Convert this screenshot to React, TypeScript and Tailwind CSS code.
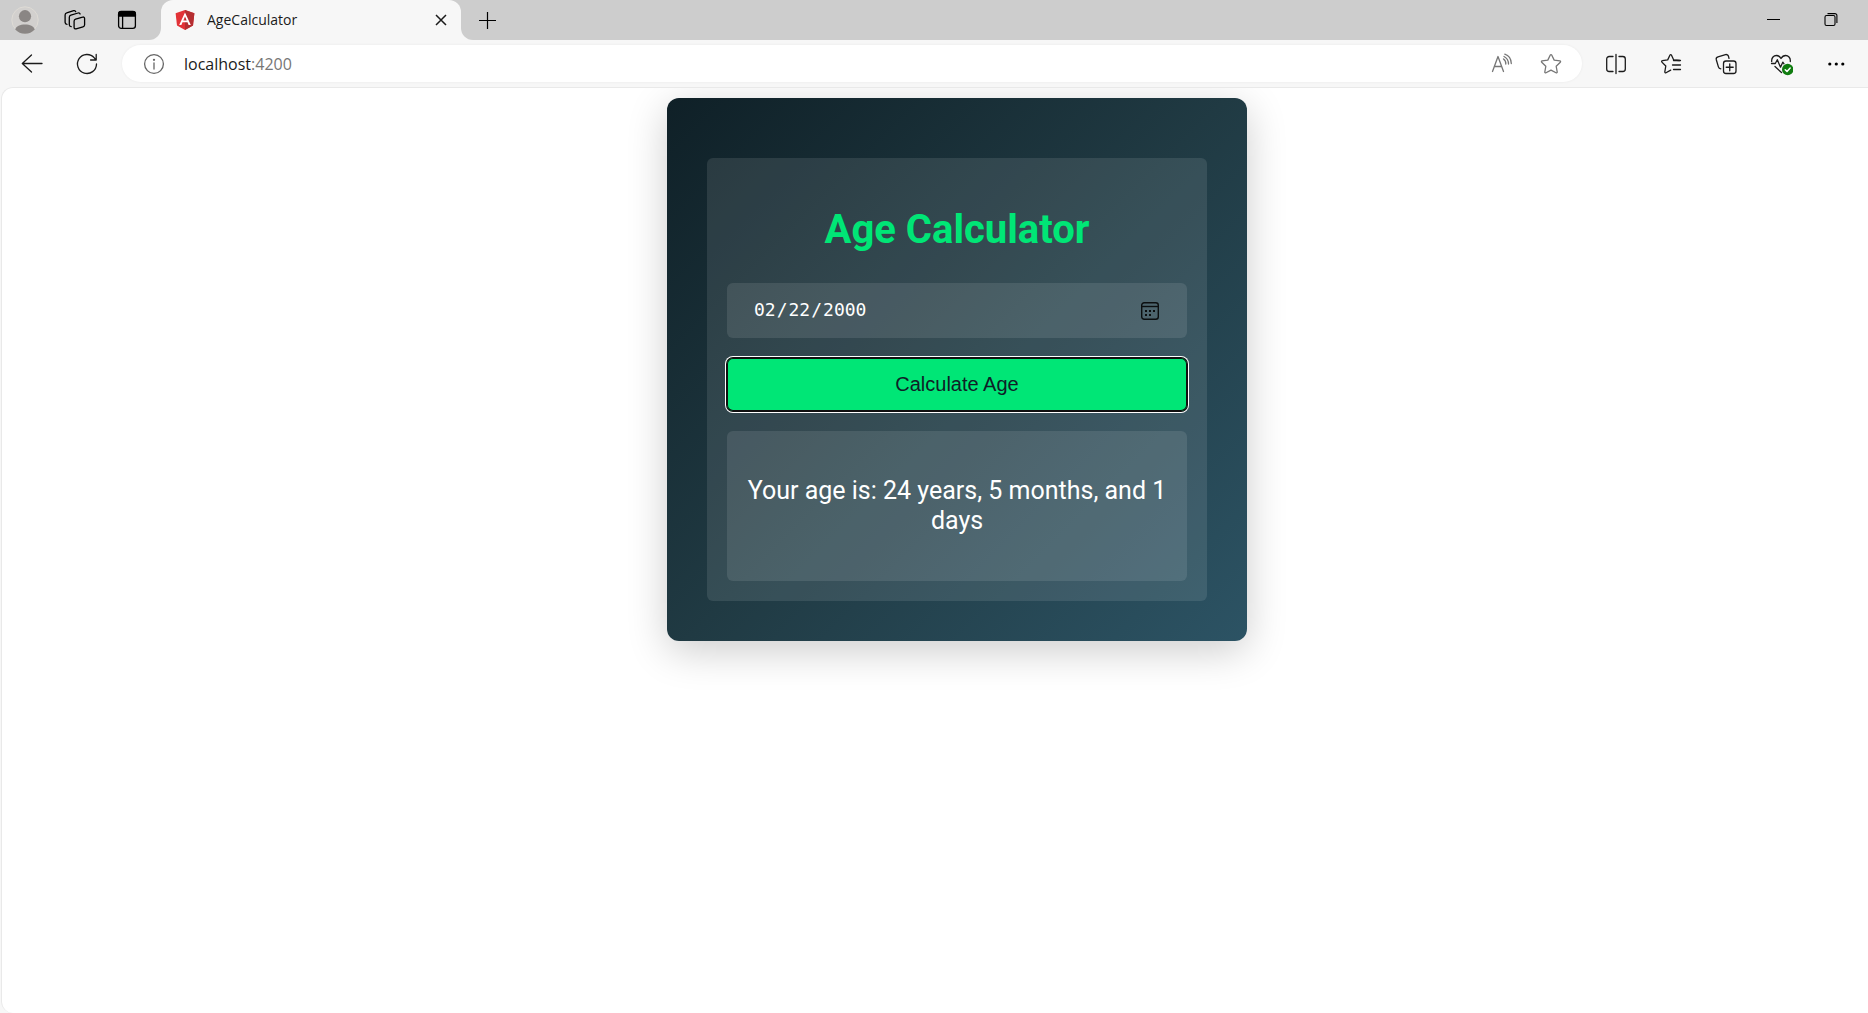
import { useState } from "react";
import type { ReactNode } from "react";

function Glyph({ children }: { children: ReactNode }) {
  return (
    <svg
      width="24"
      height="24"
      viewBox="0 0 24 24"
      fill="none"
      stroke="currentColor"
      strokeWidth="1.3"
      strokeLinecap="round"
      strokeLinejoin="round"
      className="shrink-0"
      aria-hidden="true"
    >
      {children}
    </svg>
  );
}

function IconButton({ label, className, children }: { label: string; className: string; children: ReactNode }) {
  return (
    <button type="button" aria-label={label} className={`flex shrink-0 items-center justify-center ${className}`}>
      {children}
    </button>
  );
}

function Avatar() {
  return (
    <svg width="28" height="28" viewBox="0 0 28 28" aria-hidden="true">
      <circle cx="14" cy="14" r="13.2" fill="#d2d0ce" stroke="#dedbd5" strokeWidth="1" />
      <circle cx="14" cy="10.2" r="6.1" fill="#8a8684" />
      <path d="M4.2 23.6C5.2 20 9 18.4 14 18.4s8.8 1.6 9.8 5.200A13.4 13.4 0 0 1 14 27.8a13.4 13.4 0 0 1-9.8-4.2Z" fill="#8a8684" />
    </svg>
  );
}

function TabStrip() {
  return (
    <div className="flex h-10 bg-[#f7f7f7]">
      <div className="flex w-[161px] shrink-0 items-center rounded-br-xl bg-[#cdcdcd]">
        <IconButton label="Profile" className="h-10 w-[50px]">
          <Avatar />
        </IconButton>
        <IconButton label="Workspaces" className="h-10 w-[50px]">
          <Glyph>
            <path d="M12.6 11.1 19.6 9.1a1.5 1.5 0 0 1 2 1.4v6.2a2.2 2.2 0 0 1-1.600 2.100l-6.900 2a1.500 1.500 0 0 1-2-1.400v-6.200a2.200 2.200 0 0 1 1.500-2.100Z" />
            <path d="M8.200 18.700a2 2 0 0 1-1.900-1.900V9.300a2.200 2.200 0 0 1 1.600-2.100l7.200-2.200a1.600 1.600 0 0 1 2 1" />
            <path d="M4 16.300a2 2 0 0 1-1.900-1.900V7a2.200 2.200 0 0 1 1.600-2.100l7-2.200a1.600 1.600 0 0 1 2 1" />
          </Glyph>
        </IconButton>
        <IconButton label="Tab actions" className="h-10 w-[54px]">
          <Glyph>
            <rect x="3.6" y="3.6" width="16.8" height="16.8" rx="2.6" />
            <path d="M3.6 8V6a2.5 2.5 0 0 1 2.5-2.5h11.8A2.5 2.5 0 0 1 20.4 6v2Z" fill="currentColor" />
            <path d="M7.6 8v12" />
          </Glyph>
        </IconButton>
      </div>

      <div className="w-[300px] shrink-0 bg-[#cdcdcd]">
        <div className="flex h-10 items-center rounded-t-xl bg-[#f7f7f7] pr-1 pl-3.5">
          <svg width="20" height="20" viewBox="0 0 20 20" className="shrink-0" aria-hidden="true">
            <path d="M10 0 19.4 3.3 18 15.6 10 20 2 15.6.6 3.3Z" fill="#e23237" />
            <path d="M10 0 19.4 3.3 18 15.6 10 20Z" fill="#b52e31" />
            <path d="M10 2.400 4.2 15h2.200l1.100-2.800h5L13.600 15h2.200ZM10 6.600l1.700 3.900H8.300Z" fill="#fff" fillRule="evenodd" />
          </svg>
          <span className="ml-3 flex-1 truncate text-sm text-[#1b1b1b]">AgeCalculator</span>
          <IconButton label="Close tab" className="size-8">
            <svg width="12" height="12" viewBox="0 0 12 12" stroke="#1b1b1b" strokeWidth="1.5" aria-hidden="true">
              <path d="m1 1 10 10M11 1 1 11" />
            </svg>
          </IconButton>
        </div>
      </div>

      <div className="flex flex-1 items-center rounded-bl-xl bg-[#cdcdcd] pr-[9px]">
        <IconButton label="New tab" className="h-10 w-[53px]">
          <svg width="19" height="19" viewBox="0 0 19 19" stroke="#000" strokeWidth="1.2" aria-hidden="true">
            <path d="M9.5 1v17M1 9.5h17" />
          </svg>
        </IconButton>
        <div className="flex-1" />
        <IconButton label="Minimize" className="h-10 w-[57px]">
          <svg width="13" height="13" viewBox="0 0 13 13" stroke="#000" strokeWidth="1" aria-hidden="true">
            <path d="M0 5.5h13" />
          </svg>
        </IconButton>
        <IconButton label="Restore" className="h-10 w-[57px]">
          <svg width="14" height="14" viewBox="0 0 14 14" fill="none" stroke="#000" strokeWidth="1.1" aria-hidden="true">
            <rect x="1" y="2.5" width="10" height="10" rx="1.5" />
            <path d="M3.5.6h7.400a2 2 0 0 1 2 2V10" />
          </svg>
        </IconButton>
      </div>
    </div>
  );
}

function Toolbar() {
  const [path, setPath] = useState(":4200");
  return (
    <div className="flex h-[47px] items-center bg-[#f7f7f7] pr-1 text-[#1b1b1b]">
      <IconButton label="Back" className="h-10 w-16">
        <Glyph>
          <path d="M2.3 11.5H22M11.5 3 2.3 11.5l9.200 8.500" />
        </Glyph>
      </IconButton>
      <IconButton label="Refresh" className="mr-[13px] h-10 w-[45px]">
        <Glyph>
          <path d="M21.500 12a9.500 9.500 0 1 1-2.200-6.100L21 8M21.200 2.500V8h-5.600" />
        </Glyph>
      </IconButton>

      <div className="flex h-[37px] flex-1 items-center rounded-full bg-white pr-[19px] pl-5 shadow-[0_0_3px_rgba(0,0,0,0.06)]">
        <IconButton label="View site information" className="size-6 text-[#666]">
          <Glyph>
            <circle cx="12" cy="12" r="9.4" />
            <path d="M12 11v6" />
            <circle cx="12" cy="7.8" r=".5" fill="currentColor" />
          </Glyph>
        </IconButton>
        <label className="ml-[18px] flex flex-1 items-center text-base">
          <span>localhost</span>
          <input
            aria-label="Address"
            value={path}
            onChange={(e) => setPath(e.target.value)}
            className="min-w-0 flex-1 bg-transparent text-[#767676] outline-none"
          />
        </label>
        <IconButton label="Read aloud" className="w-[50px] text-[#767676]">
          <Glyph>
            <path d="m3.500 19.500 5.500-15L14.500 19.500M5.300 14.500h7.400" />
            <path d="M14.500 7a5.500 5.500 0 0 1 2.300 5M15 4.500a8.500 8.500 0 0 1 4.500 7.500M15.800 2.200c4 1.300 6.300 5 6.500 9.300" />
          </Glyph>
        </IconButton>
        <IconButton label="Add to favorites" className="ml-[13px] w-6 text-[#767676]">
          <Glyph>
            <path d="M11.300 3a.8.8 0 0 1 1.400 0l2.500 5.100 5.700.8a.8.8 0 0 1 .4 1.400l-4.100 4 1 5.700a.8.8 0 0 1-1.200.8L12 18.100l-5 2.700a.8.8 0 0 1-1.200-.8l1-5.700-4.100-4a.8.8 0 0 1 .4-1.400l5.700-.8Z" />
          </Glyph>
        </IconButton>
      </div>

      <div className="ml-1.5 flex items-center pr-px">
        <IconButton label="Split screen" className="h-10 w-[55px]">
          <Glyph>
            <path d="M9 4.500H5.200a2.500 2.500 0 0 0-2.500 2.500v10a2.500 2.500 0 0 0 2.500 2.500H9M15 4.500h3.800A2.500 2.500 0 0 1 21.300 7v10a2.500 2.500 0 0 1-2.500 2.500H15M12 2.500v19" />
          </Glyph>
        </IconButton>
        <IconButton label="Favorites" className="h-10 w-[55px]">
          <Glyph>
            <path d="M20.500 8.500 14.700 8 12.400 3a.8.8 0 0 0-1.400 0L8.700 7.900l-5.300.8a.8.8 0 0 0-.5 1.400L6.800 14l-1 5.900a.8.8 0 0 0 1.200.8l4.700-2.600" />
            <path d="M14.500 8.500h7M13.500 13h8M14.500 17.500h7" />
          </Glyph>
        </IconButton>
        <IconButton label="Collections" className="h-10 w-[55px]">
          <Glyph>
            <rect x="9.500" y="9" width="12.500" height="12.500" rx="2.500" />
            <path d="M15.750 11.800v7M12.200 15.250h7" />
            <path d="M6.800 16.800a2.500 2.500 0 0 1-2.400-1.900L2.300 7.700a2.400 2.400 0 0 1 1.700-2.900l7.500-2.200a2.400 2.400 0 0 1 3 1.700l.5 2" />
          </Glyph>
        </IconButton>
        <IconButton label="Browser essentials" className="h-10 w-[55px]">
          <Glyph>
            <path d="M2.700 9.500C2.300 5.500 5 3.500 7.300 3.500c2.200 0 3.700 1.200 4.700 3 1-1.800 2.500-3 4.700-3 2.300 0 5 2 4.600 6" />
            <path d="M2.500 11.500h3.800l2-3.800 3.200 7.500 2.300-5 1.200 1.600M6 14.500l6.500 6" />
            <circle cx="18.700" cy="17.500" r="5.700" fill="#107c10" stroke="none" />
            <path d="m16.200 17.700 1.800 1.700 3.200-3.400" stroke="#fff" strokeWidth="1.5" />
          </Glyph>
        </IconButton>
        <IconButton label="Settings and more" className="h-10 w-[55px]">
          <Glyph>
            <g fill="#000" stroke="none">
              <circle cx="5.800" cy="12" r="1.600" />
              <circle cx="12.300" cy="12" r="1.600" />
              <circle cx="18.800" cy="12" r="1.600" />
            </g>
          </Glyph>
        </IconButton>
      </div>
    </div>
  );
}

function AgeCalculator() {
  const [birthDate, setBirthDate] = useState("2000-02-22");
  return (
    <section className="w-[580px] rounded-xl bg-[linear-gradient(135deg,#0f2027,#203a43,#2c5364)] px-10 pt-[60px] pb-10 font-['Roboto',sans-serif] shadow-[0_10px_40px_rgba(0,0,0,0.2)]">
      <div className="flex flex-col gap-5 rounded-md bg-white/10 p-5">
        <h1 className="mt-7 mb-2.5 text-center text-[40px] leading-[47px] font-bold text-[#00e676]">Age Calculator</h1>
        <div className="relative flex">
          <input
            type="date"
            aria-label="Date of birth"
            value={birthDate}
            onChange={(e) => setBirthDate(e.target.value)}
            className="h-[55px] w-full rounded-md bg-white/10 px-[26px] pb-0.5 font-['DejaVu_Sans_Mono',monospace] text-lg text-white outline-none [&::-webkit-calendar-picker-indicator]:opacity-0"
          />
          <svg
            width="20"
            height="20"
            viewBox="0 0 20 20"
            fill="none"
            stroke="#0c0f10"
            strokeWidth="1.4"
            className="pointer-events-none absolute top-[18px] right-[27px]"
            aria-hidden="true"
          >
            <rect x="1.700" y="1.700" width="16.600" height="16.600" rx="2.500" />
            <path d="M1.700 5.500h16.600" />
            <path d="M5 10h2M9 10h2M13 10h2M5 14h2M9 14h2" strokeWidth="2" />
          </svg>
        </div>
        <button
          type="button"
          className="h-[53px] rounded-md bg-[#00e676] pb-0.5 font-['Liberation_Sans',Arial,sans-serif] text-xl text-[#0f2027] shadow-[inset_0_0_0_1px_#101010,0_0_0_1px_#101010,0_0_0_2px_#fff]"
        >
          Calculate Age
        </button>
        <p className="rounded-md bg-white/10 px-5 py-[45px] text-center text-[25px] leading-[30px] text-white">
          Your age is: 24 years, 5 months, and 1 days
        </p>
      </div>
    </section>
  );
}

export default function App() {
  return (
    <div className="flex min-h-screen flex-col bg-[#f7f7f7] font-['Open_Sans',sans-serif]">
      <header>
        <TabStrip />
        <Toolbar />
      </header>
      <main className="ml-px flex flex-1 items-start justify-center overflow-hidden rounded-l-xl border-t border-l border-[#e9e9e9] bg-white pt-2.5 pl-11">
        <AgeCalculator />
      </main>
    </div>
  );
}
